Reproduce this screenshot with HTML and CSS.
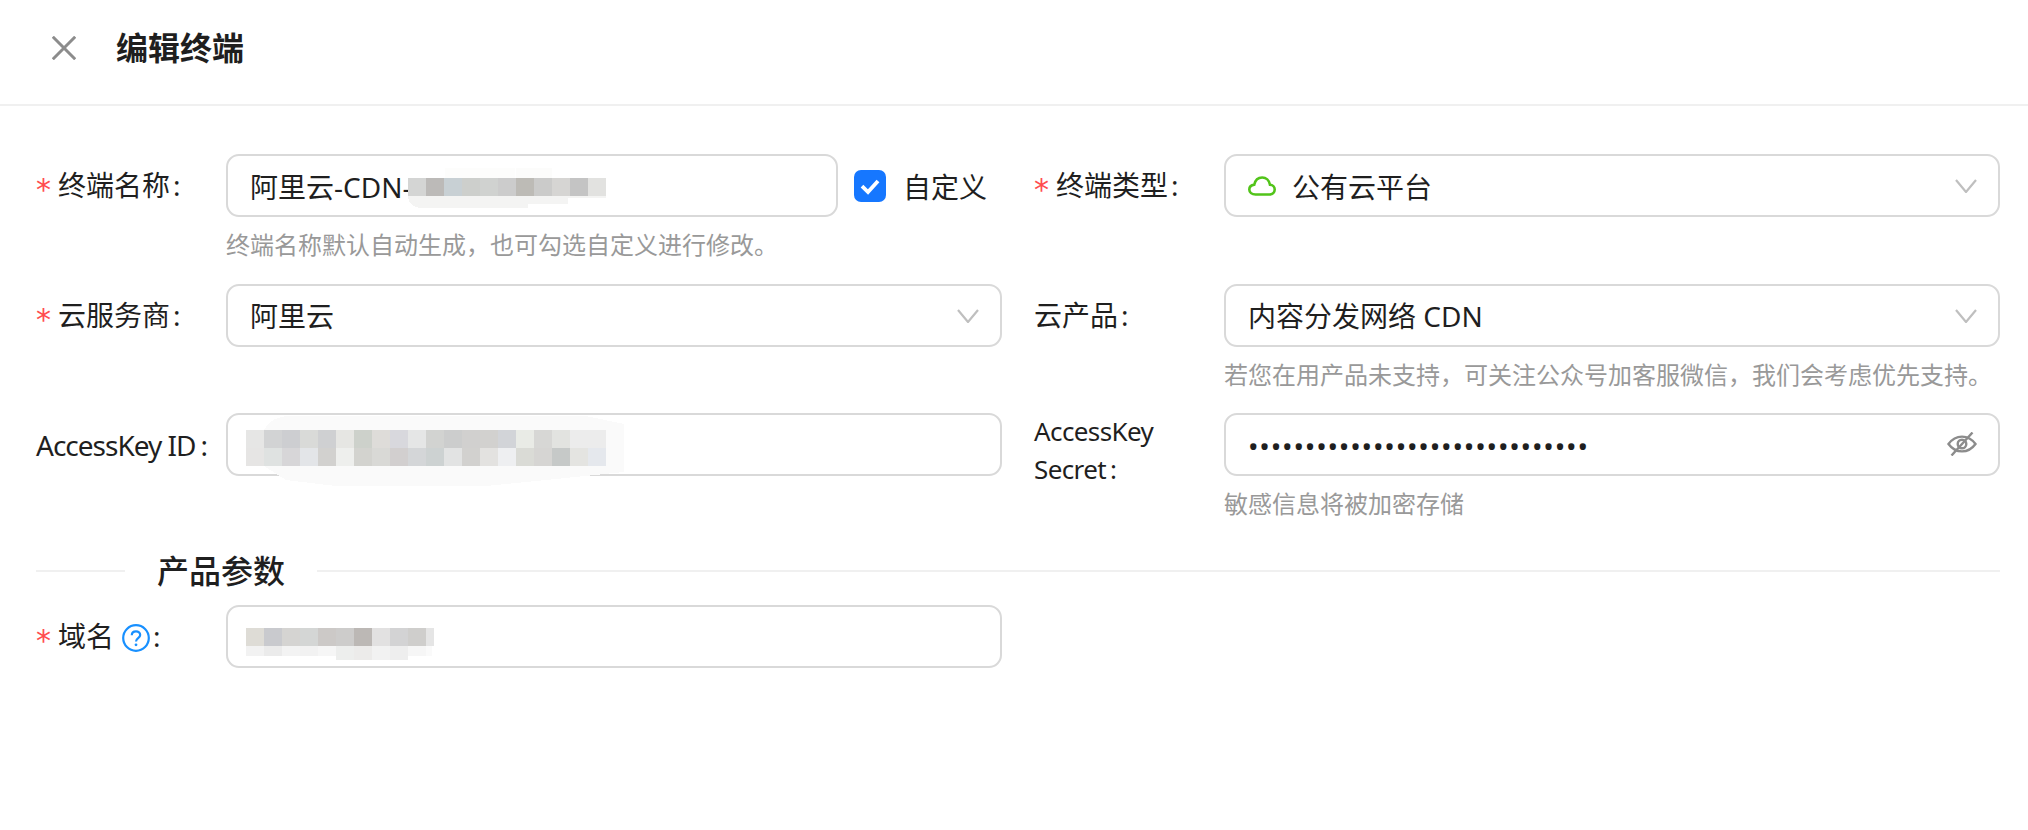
FILE: index.html
```html
<!DOCTYPE html>
<html lang="zh-CN">
<head>
<meta charset="utf-8">
<title>编辑终端</title>
<link rel="stylesheet" href="styles.css">
</head>
<body>
<header class="header">
  <svg class="close" viewBox="0 0 24 24" aria-hidden="true"><path d="M.8 .8 23.200 23.200M23.200 .8 .8 23.200"/></svg>
  <h1 class="title">编辑终端</h1>
</header>
<main class="page">
  <div class="form-grid">
    <div class="field">
      <div class="label"><span class="req">*</span>终端名称<span class="colon">:</span></div>
      <div class="control">
        <div class="with-check">
          <div class="input">
            <span>阿里云-CDN-</span>
            <svg class="mosaic mosaic-name" width="200" height="44" viewBox="0 0 200 44" shape-rendering="crispEdges" aria-hidden="true">
              <rect x="37" y="0" width="70" height="10" fill="#fdfdfc"/><rect x="108" y="0" width="36" height="10" fill="#fcfcfb"/>
              <path d="M6 10H0V30Q2 39 12 40H120V36H160V30H198V10Z" fill="#f4f4f3"/>
              <rect x="0" y="10" width="18" height="18" fill="#d4d5d4"/><rect x="18" y="10" width="18" height="18" fill="#bcbab8"/><rect x="36" y="10" width="18" height="18" fill="#c8d0d4"/><rect x="54" y="10" width="18" height="18" fill="#cdcfcc"/><rect x="72" y="10" width="18" height="18" fill="#d0d2d0"/><rect x="90" y="10" width="18" height="18" fill="#cccccc"/><rect x="108" y="10" width="18" height="18" fill="#bdbbb6"/><rect x="126" y="10" width="18" height="18" fill="#cbcbca"/><rect x="144" y="10" width="18" height="18" fill="#d6d5d3"/><rect x="162" y="10" width="18" height="18" fill="#c4c4c4"/><rect x="180" y="10" width="18" height="18" fill="#e2e2e0"/>
            </svg>
          </div>
          <div class="check">
            <span class="checkbox"><svg viewBox="0 0 32 32" aria-hidden="true"><path d="M8 16.200 14 22 24 11"/></svg></span>
            <span class="check-text">自定义</span>
          </div>
        </div>
        <div class="help">终端名称默认自动生成&#65292;也可勾选自定义进行修改。</div>
      </div>
    </div>
    <div class="field">
      <div class="label"><span class="req">*</span>终端类型<span class="colon">:</span></div>
      <div class="control">
        <div class="input select">
          <svg class="cloud" viewBox="0 0 28 20" aria-hidden="true"><path d="M7.500 18.500H21.500C24.600 18.500 26.700 16.300 26.700 13.600 26.700 10.900 24.600 8.900 22 8.800 21.200 4.400 18 1.500 14.200 1.500 10.400 1.500 7.200 4.200 6.300 8.600 3.400 8.900 1.300 10.900 1.300 13.600 1.300 16.400 3.800 18.500 7.500 18.500Z"/></svg>
          <span>公有云平台</span>
          <svg class="chevron" viewBox="0 0 22 14" aria-hidden="true"><path d="M1 1 11 13 21 1"/></svg>
        </div>
      </div>
    </div>
    <div class="field">
      <div class="label"><span class="req">*</span>云服务商<span class="colon">:</span></div>
      <div class="control">
        <div class="input select">
          <span>阿里云</span>
          <svg class="chevron" viewBox="0 0 22 14" aria-hidden="true"><path d="M1 1 11 13 21 1"/></svg>
        </div>
      </div>
    </div>
    <div class="field">
      <div class="label">云产品<span class="colon">:</span></div>
      <div class="control">
        <div class="input select">
          <span>内容分发网络 CDN</span>
          <svg class="chevron" viewBox="0 0 22 14" aria-hidden="true"><path d="M1 1 11 13 21 1"/></svg>
        </div>
        <div class="help">若您在用产品未支持&#65292;可关注公众号加客服微信&#65292;我们会考虑优先支持。</div>
      </div>
    </div>
    <div class="field">
      <div class="label label-latin">AccessKey ID<span class="colon">:</span></div>
      <div class="control">
        <div class="input">
          <svg class="mosaic mosaic-key" width="400" height="70" viewBox="0 0 400 70" shape-rendering="crispEdges" aria-hidden="true">
            <path d="M18 14Q26 0 44 0H340L378 8V56L300 64 240 70H90L40 64 18 50Z" fill="#fafafa"/>
            <g>
              <rect x="0" y="14" width="18" height="18" fill="#e6e6e5"/><rect x="18" y="14" width="18" height="18" fill="#d2d3d4"/><rect x="36" y="14" width="18" height="18" fill="#cdced1"/><rect x="54" y="14" width="18" height="18" fill="#d9dad8"/><rect x="72" y="14" width="18" height="18" fill="#cfd0d2"/><rect x="90" y="14" width="18" height="18" fill="#e6e6e3"/><rect x="108" y="14" width="18" height="18" fill="#cdd1cb"/><rect x="126" y="14" width="18" height="18" fill="#dedcd9"/><rect x="144" y="14" width="18" height="18" fill="#d8d8dd"/><rect x="162" y="14" width="18" height="18" fill="#e5e6e6"/><rect x="180" y="14" width="18" height="18" fill="#d2d3d1"/><rect x="198" y="14" width="18" height="18" fill="#cccdcd"/><rect x="216" y="14" width="18" height="18" fill="#d1d0cf"/><rect x="234" y="14" width="18" height="18" fill="#d2d1cf"/><rect x="252" y="14" width="18" height="18" fill="#d2d4d8"/><rect x="270" y="14" width="18" height="18" fill="#e9ebe6"/><rect x="288" y="14" width="18" height="18" fill="#d7d7d5"/><rect x="306" y="14" width="18" height="18" fill="#e2e3e0"/><rect x="324" y="14" width="18" height="18" fill="#ececec"/><rect x="342" y="14" width="18" height="18" fill="#ececec"/>
              <rect x="0" y="32" width="18" height="18" fill="#e6e5e4"/><rect x="18" y="32" width="18" height="18" fill="#dfe2e1"/><rect x="36" y="32" width="18" height="18" fill="#d7d6d8"/><rect x="54" y="32" width="18" height="18" fill="#e3e5e8"/><rect x="72" y="32" width="18" height="18" fill="#d2d1cf"/><rect x="90" y="32" width="18" height="18" fill="#eeefed"/><rect x="108" y="32" width="18" height="18" fill="#d3d3cf"/><rect x="126" y="32" width="18" height="18" fill="#d9d9d6"/><rect x="144" y="32" width="18" height="18" fill="#d2cfcf"/><rect x="162" y="32" width="18" height="18" fill="#d4d6d8"/><rect x="180" y="32" width="18" height="18" fill="#cdd2d2"/><rect x="198" y="32" width="18" height="18" fill="#e2e3e3"/><rect x="216" y="32" width="18" height="18" fill="#d2d1cf"/><rect x="234" y="32" width="18" height="18" fill="#e3e2e0"/><rect x="252" y="32" width="18" height="18" fill="#eeeff1"/><rect x="270" y="32" width="18" height="18" fill="#dadbd6"/><rect x="288" y="32" width="18" height="18" fill="#d6d5d3"/><rect x="306" y="32" width="18" height="18" fill="#c6c9c8"/><rect x="324" y="32" width="18" height="18" fill="#e4e4e1"/><rect x="342" y="32" width="18" height="18" fill="#e5e8ed"/>
            </g>
          </svg>
        </div>
      </div>
    </div>
    <div class="field">
      <div class="label label-wrap">AccessKey Secret<span class="colon">:</span></div>
      <div class="control">
        <div class="input">
          <span class="dots">••••••••••••••••••••••••••••••</span>
          <svg class="eye" viewBox="0 0 30 24" aria-hidden="true"><path d="M1.500 12C5 7.200 9.500 4.600 15 4.600S25 7.200 28.500 12C25 16.800 20.500 19.400 15 19.400S5 16.800 1.500 12Z"/><circle cx="15" cy="12" r="4.300"/><path d="M4.500 23.500 25.500 .5"/></svg>
        </div>
        <div class="help">敏感信息将被加密存储</div>
      </div>
    </div>
  </div>

  <div class="divider"><span class="divider-text">产品参数</span></div>

  <div class="form-grid">
    <div class="field">
      <div class="label"><span class="req">*</span>域名<svg class="help-icon" viewBox="0 0 28 28" aria-hidden="true"><circle cx="14" cy="14" r="12.800"/><path d="M9.800 11.300C9.800 8.900 11.600 7.400 14 7.400S18.200 8.900 18.200 11C18.200 14 14 14.200 14 17.400"/><circle class="help-dot" cx="14" cy="20.800" r="1.400"/></svg><span class="colon">:</span></div>
      <div class="control">
        <div class="input">
          <svg class="mosaic mosaic-domain" width="190" height="44" viewBox="0 0 190 44" shape-rendering="crispEdges" aria-hidden="true">
            <rect x="0" y="4" width="18" height="18" fill="#dedcd6"/><rect x="18" y="4" width="18" height="18" fill="#c9cace"/><rect x="36" y="4" width="18" height="18" fill="#d5d4d2"/><rect x="54" y="4" width="18" height="18" fill="#d4d6d5"/><rect x="72" y="4" width="18" height="18" fill="#ccc9c7"/><rect x="90" y="4" width="18" height="18" fill="#cdcccb"/><rect x="108" y="4" width="18" height="18" fill="#bcb8b5"/><rect x="126" y="4" width="18" height="18" fill="#e2e1e1"/><rect x="144" y="4" width="18" height="18" fill="#d3d3d4"/><rect x="162" y="4" width="18" height="18" fill="#cfcecc"/><rect x="180" y="4" width="8" height="18" fill="#e5e5e5"/>
            <rect x="0" y="22" width="18" height="10" fill="#f2f2f2"/><rect x="18" y="22" width="18" height="10" fill="#ebebeb"/><rect x="36" y="22" width="18" height="10" fill="#f3f3f3"/><rect x="54" y="22" width="18" height="10" fill="#f2f2f2"/><rect x="72" y="22" width="18" height="10" fill="#f6f6f6"/><rect x="90" y="22" width="18" height="14" fill="#edeeed"/><rect x="108" y="22" width="18" height="14" fill="#ecebea"/><rect x="126" y="22" width="18" height="14" fill="#f2f2f2"/><rect x="144" y="22" width="18" height="14" fill="#eeeeee"/><rect x="162" y="22" width="18" height="10" fill="#f6f6f6"/><rect x="180" y="22" width="6" height="10" fill="#fafafa"/>
          </svg>
        </div>
      </div>
    </div>
  </div>
</main>
</body>
</html>
```
FILE: styles.css
```css
* { box-sizing: border-box; }
html, body { margin: 0; padding: 0; background: #fff; }
body {
  font-family: "Noto Sans", "Noto Sans CJK SC", sans-serif;
  font-size: 28px;
  color: #1f1f1f;
}
.header {
  display: flex;
  align-items: center;
  gap: 40px;
  height: 106px;
  padding: 0 0 8px 52px;
  border-bottom: 2px solid #f0f0f0;
}
.close { width: 24px; height: 24px; flex: none; }
.close path { fill: none; stroke: #8c8c8c; stroke-width: 3; }
.title { margin: 0; font-size: 32px; font-weight: 700; line-height: 44px; }

.page { padding: 48px 28px 0 36px; }
.form-grid {
  display: grid;
  grid-template-columns: 966px 966px;
  column-gap: 32px;
  row-gap: 20.5px;
}
.field { display: flex; align-items: flex-start; min-height: 109px; }
.label {
  flex: none;
  width: 190px;
  height: 63px;
  line-height: 63px;
  white-space: nowrap;
}
.field .label.label-wrap {
  width: 140px;
  margin: -1px 50px 0 0;
  font-size: 26px;
  letter-spacing: -0.6px;
  line-height: 38px;
  height: 76px;
  white-space: normal;
}
.label-latin { letter-spacing: -1px; line-height: 65px; }
.req {
  display: inline-block;
  width: 22px;
  color: #ff4d4f;
  font-family: "DejaVu Sans", sans-serif;
  font-size: 30px;
  line-height: 1;
  vertical-align: -4px;
}
.colon { margin-left: 3px; }
.label-latin .colon { margin-left: 5px; }
.label-wrap .colon { margin-left: 4px; }
.control { flex: 1; min-width: 0; }
.input {
  position: relative;
  display: flex;
  align-items: center;
  flex: 1;
  min-width: 0;
  height: 63px;
  padding: 0 22px;
  border: 2px solid #d9d9d9;
  border-radius: 13px;
  background: #fff;
  white-space: nowrap;
}
.with-check { display: flex; align-items: center; gap: 16px; }
.check { display: flex; align-items: center; gap: 17px; width: 148px; flex: none; white-space: nowrap; }
.checkbox {
  display: block;
  width: 32px;
  height: 32px;
  border-radius: 7px;
  background: #1677ff;
}
.checkbox svg { display: block; width: 32px; height: 32px; }
.checkbox path { fill: none; stroke: #fff; stroke-width: 3.8; }
.help { height: 36px; margin-top: 10px; line-height: 36px; font-size: 24px; color: #999; white-space: nowrap; }
.chevron { position: absolute; right: 21px; top: 23px; width: 22px; height: 14px; }
.chevron path { fill: none; stroke: #bfbfbf; stroke-width: 2.2; }
.cloud { width: 28px; height: 20px; margin-right: 16px; flex: none; }
.cloud path { fill: none; stroke: #52c41a; stroke-width: 2.6; }
.eye { position: absolute; right: 21px; top: 17px; width: 30px; height: 24px; }
.eye path, .eye circle { fill: none; stroke: #8c8c8c; stroke-width: 2.4; }
.dots { padding-top: 2px; letter-spacing: 0.83px; font-size: 28px; }
.mosaic { position: absolute; }
.mosaic-name { left: 180px; top: 12px; }
.mosaic-key { left: 18px; top: 1px; }
.mosaic-domain { left: 18px; top: 17px; }
.help-icon { width: 28px; height: 28px; margin-left: 8px; vertical-align: -5px; }
.help-icon circle, .help-icon path { fill: none; stroke: #1890ff; stroke-width: 2.2; }
.help-icon .help-dot { fill: #1890ff; stroke: none; }
.divider { display: flex; align-items: center; height: 44px; margin: 27px 0 12px; }
.divider::before { content: ""; width: 89px; border-top: 2px solid #f0f0f0; }
.divider::after { content: ""; flex: 1; border-top: 2px solid #f0f0f0; }
.divider-text { padding: 0 32px; font-size: 32px; font-weight: 500; line-height: 44px; }
```
